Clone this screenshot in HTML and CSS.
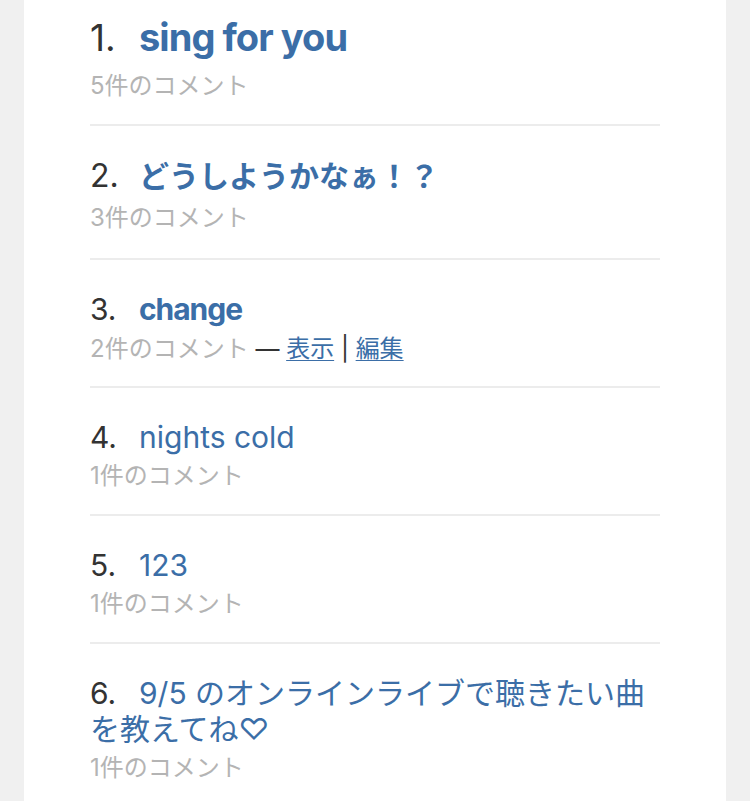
FILE: index.html
```html
<!DOCTYPE html>
<html lang="ja">
<head>
<meta charset="utf-8">
<title>リクエスト一覧</title>
<link rel="stylesheet" href="styles.css">
</head>
<body>
<div class="panel">
  <ol class="topics">
    <li class="topic topic-5">
      <div class="title"><span class="num">1.</span><a href="#" class="link bold">sing for you</a></div>
      <div class="sub">5件のコメント</div>
    </li>
    <li class="topic topic-3">
      <div class="title"><span class="num">2.</span><a href="#" class="link bold">どうしようかなぁ！？</a></div>
      <div class="sub">3件のコメント</div>
    </li>
    <li class="topic topic-2">
      <div class="title"><span class="num">3.</span><a href="#" class="link bold">change</a></div>
      <div class="sub">2件のコメント <span class="dark">—</span> <a href="#" class="action">表示</a> <span class="dark">|</span> <a href="#" class="action">編集</a></div>
    </li>
    <li class="topic">
      <div class="title"><span class="num">4.</span><a href="#" class="link">nights cold</a></div>
      <div class="sub">1件のコメント</div>
    </li>
    <li class="topic">
      <div class="title"><span class="num">5.</span><a href="#" class="link">123</a></div>
      <div class="sub">1件のコメント</div>
    </li>
    <li class="topic">
      <div class="title"><span class="num">6.</span><a href="#" class="link">9/5 のオンラインライブで聴きたい曲を教えてね♡</a></div>
      <div class="sub">1件のコメント</div>
    </li>
  </ol>
</div>
</body>
</html>
```
FILE: styles.css
```css
html, body {
  margin: 0;
  padding: 0;
  background: #f0f0f0;
}
body {
  font-family: "Inter", "Noto Sans CJK JP", sans-serif;
  color: #333;
}
.panel {
  margin: 0 24px;
  background: #fff;
  padding: 0 66px;
  min-height: 801px;
  box-sizing: border-box;
}
.topics {
  list-style: none;
  margin: 0;
  padding: 0;
}
.topic {
  padding: 31px 0 20px;
  border-bottom: 2px solid #ececec;
}
.title {
  font-size: 30px;
  line-height: 36px;
}
.num {
  display: inline-block;
  width: 49px;
  color: #333;
  font-weight: 400;
}
.link {
  color: #3b6ea7;
  text-decoration: none;
  font-weight: 400;
}
.link.bold {
  font-weight: 700;
  letter-spacing: -0.035em;
}
.sub {
  margin-top: 3px;
  font-size: 24px;
  line-height: 36px;
  color: #b4b4b4;
}
.dark {
  color: #333;
}
.action {
  color: #3b6ea7;
  text-decoration: underline;
  text-underline-offset: 3px;
  text-decoration-thickness: 1px;
}
.topic-5 {
  padding: 15px 0 20px;
}
.topic-5 .title {
  font-size: 37px;
  line-height: 44px;
}
.topic-5 .link.bold {
  font-size: 38px;
  letter-spacing: -0.025em;
}
.topic-5 .sub {
  margin-top: 8px;
}
.topic-3 {
  padding: 30px 0 22px;
}
.topic-3 .title {
  font-size: 32px;
  line-height: 40px;
}
.topic-3 .link.bold {
  font-size: 30px;
  letter-spacing: 0;
}
.topic-3 .sub {
  margin-top: 4px;
}
.topic-2 .sub {
  margin-top: 4px;
}
.topic-2 {
  padding-bottom: 19px;
}
.topic:last-child {
  border-bottom: none;
}
```
